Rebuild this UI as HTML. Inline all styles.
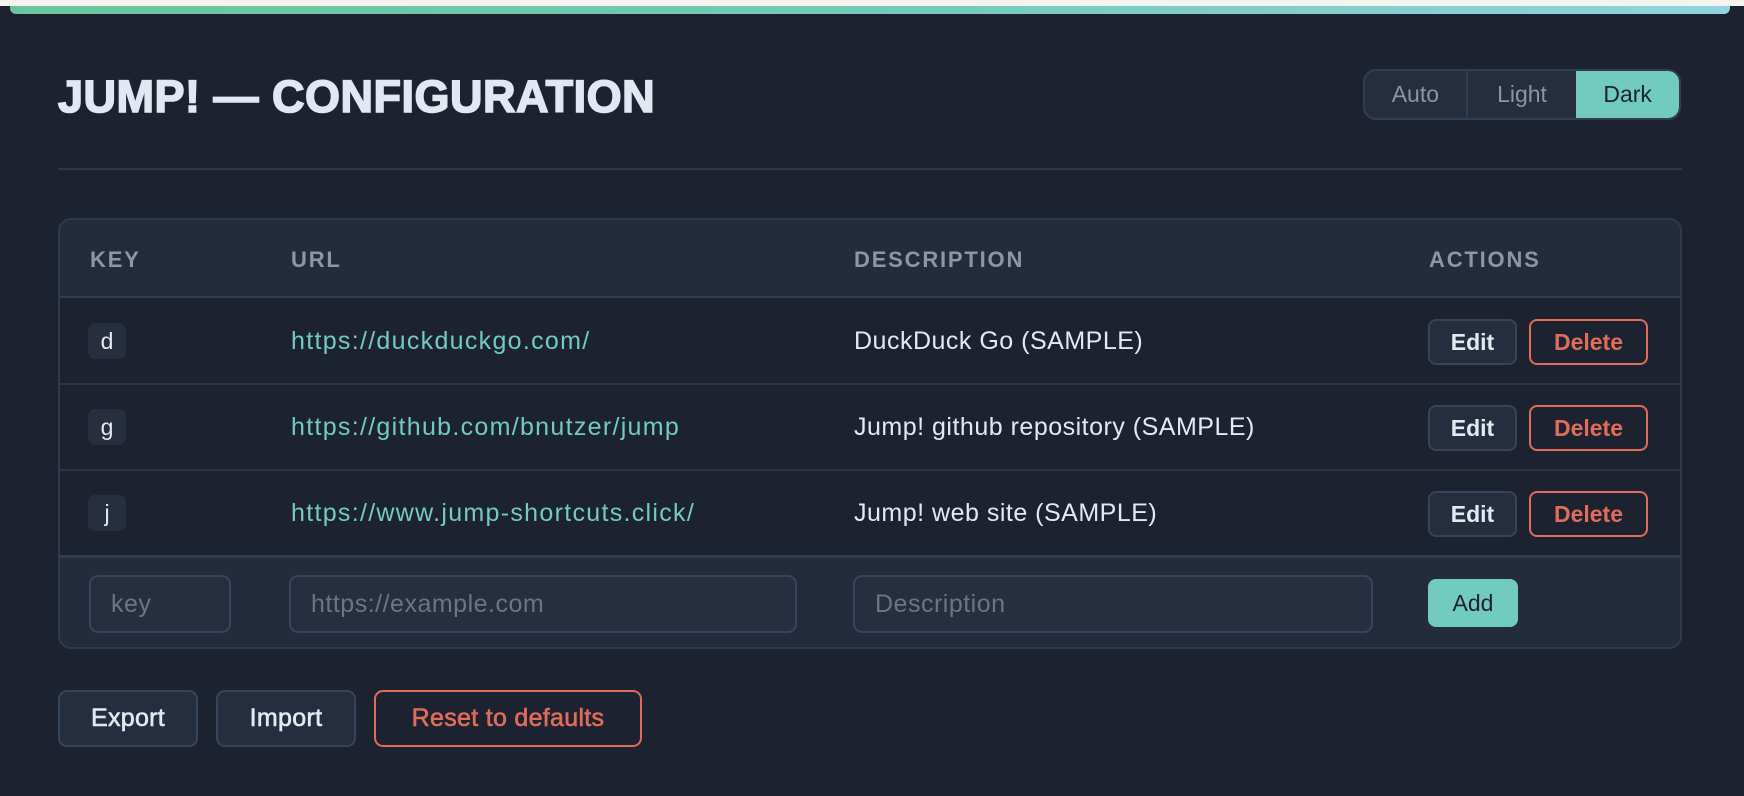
<!DOCTYPE html>
<html><head><meta charset="utf-8"><style>
*{box-sizing:border-box;margin:0;padding:0}
body{width:1744px;height:796px;background:#1d2230;font-family:"Liberation Sans",sans-serif;position:relative;overflow:hidden;color:#e4e9f1}
.abs{position:absolute}
.topwhite{left:0;top:0;width:1744px;height:6px;background:#f5f3f0}
.bar{left:10px;top:6px;width:1720px;height:8px;background:linear-gradient(90deg,#6cc59a,#74cab8 50%,#8fd4de);border-radius:0 0 6px 6px}
.title{left:58px;top:74px;font-size:45px;font-weight:bold;color:#e1e8f1;letter-spacing:0.5px;line-height:46px;white-space:nowrap;-webkit-text-stroke:1.6px #e1e8f1}
.div{left:58px;top:168px;width:1624px;height:2px;background:#2e3848}
.toggle{left:1363px;top:69px;width:318px;height:51px;border:2px solid #323d4f;border-radius:13px;overflow:hidden;background:#252e3e;display:flex}
.toggle div{display:flex;align-items:center;justify-content:center;font-size:23px;color:#8a95a6}
.table{left:58px;top:218px;width:1624px;height:431px;border:2px solid #2f3a4c;border-radius:13px;overflow:hidden;background:#1d2230}
.hdr{position:absolute;left:0;top:0;width:100%;height:78px;background:#232c3c;border-bottom:2px solid #323d4f}
.th{position:absolute;top:27px;font-size:22px;font-weight:bold;letter-spacing:1.8px;color:#8b96a6}
.row{position:absolute;left:0;width:100%;height:86px;border-bottom:2px solid #2c3647}
.cell{position:absolute;top:27px;font-size:25px;line-height:30px;white-space:nowrap;letter-spacing:0.5px}
.badge{position:absolute;left:28px;top:24px;width:38px;height:36px;background:#272f3e;border-radius:7px;font-size:23px;display:flex;align-items:center;justify-content:center;color:#e4e9f1}
.url{color:#72cbc0;letter-spacing:1.3px}
.btn{position:absolute;height:46px;border-radius:8px;display:flex;align-items:center;justify-content:center;font-size:23px;font-weight:bold}
.edit{background:#252e3e;border:2px solid #38445a;color:#e4e9f1;width:89px}
.del{border:2px solid #e06c5a;color:#e06c5a;width:119px}
.add{position:absolute;left:0;top:335px;width:100%;height:100px;background:#232c3c;border-top:3px solid #323d4f}
.inp{position:absolute;top:17px;height:58px;border:2px solid #38445a;border-radius:9px;background:#262f3f;font-size:25px;color:#6a7587;padding-left:20px;display:flex;align-items:center;letter-spacing:0.5px}
.bb{position:absolute;top:690px;height:57px;border-radius:9px;display:flex;align-items:center;justify-content:center;font-size:25px;font-weight:normal;-webkit-text-stroke:0.6px currentColor;letter-spacing:0.3px}
</style></head><body>
<div class="abs topwhite"></div>
<div class="abs bar"></div>
<div class="abs title">JUMP! — CONFIGURATION</div>
<div class="abs toggle">
<div style="width:104px;border-right:2px solid #323d4f">Auto</div>
<div style="width:110px">Light</div>
<div style="width:104px;background:#72cbc0;color:#1d2230">Dark</div>
</div>
<div class="abs div"></div>
<div class="abs table">
<div class="hdr">
<div class="th" style="left:30px">KEY</div>
<div class="th" style="left:231px">URL</div>
<div class="th" style="left:794px">DESCRIPTION</div>
<div class="th" style="left:1369px">ACTIONS</div>
</div>
<div class="row" style="top:79px">
<div class="badge">d</div>
<div class="cell url" style="left:231px">https://duckduckgo.com/</div>
<div class="cell" style="left:794px">DuckDuck Go (SAMPLE)</div>
<div class="btn edit" style="left:1368px;top:20px">Edit</div>
<div class="btn del" style="left:1469px;top:20px">Delete</div>
</div>
<div class="row" style="top:165px">
<div class="badge">g</div>
<div class="cell url" style="left:231px">https://github.com/bnutzer/jump</div>
<div class="cell" style="left:794px">Jump! github repository (SAMPLE)</div>
<div class="btn edit" style="left:1368px;top:20px">Edit</div>
<div class="btn del" style="left:1469px;top:20px">Delete</div>
</div>
<div class="row" style="top:251px;border-bottom:none">
<div class="badge">j</div>
<div class="cell url" style="left:231px">https://www.jump-shortcuts.click/</div>
<div class="cell" style="left:794px">Jump! web site (SAMPLE)</div>
<div class="btn edit" style="left:1368px;top:20px">Edit</div>
<div class="btn del" style="left:1469px;top:20px">Delete</div>
</div>
<div class="add">
<div class="inp" style="left:29px;width:142px">key</div>
<div class="inp" style="left:229px;width:508px">https://example.com</div>
<div class="inp" style="left:793px;width:520px">Description</div>
<div class="btn" style="left:1368px;top:21px;width:90px;height:48px;background:#72cbc0;color:#1d2230;font-weight:normal">Add</div>
</div>
</div>
<div class="bb" style="left:58px;width:140px;background:#252e3e;border:2px solid #38445a;color:#e4e9f1">Export</div>
<div class="bb" style="left:216px;width:140px;background:#252e3e;border:2px solid #38445a;color:#e4e9f1">Import</div>
<div class="bb" style="left:374px;width:268px;border:2px solid #e06c5a;color:#e06c5a">Reset to defaults</div>
</body></html>
